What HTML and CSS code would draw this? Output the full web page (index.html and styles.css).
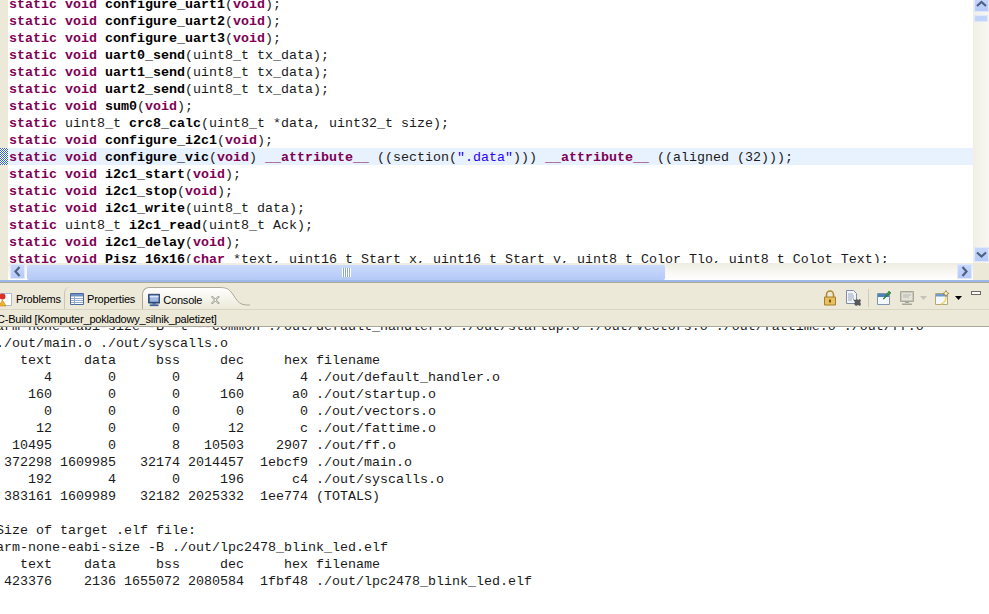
FILE: index.html
```html
<!DOCTYPE html>
<html lang="en">
<head>
    <meta charset="UTF-8">
    <title>Console</title>
    <link rel="stylesheet" href="styles.css">
</head>
<body>
    <div class="editor">
        <div class="ruler">
            <svg class="ruler-mark" width="8" height="17" shape-rendering="crispEdges"><defs><pattern id="checker" width="2" height="2" patternUnits="userSpaceOnUse"><rect width="2" height="2" fill="#fff"/><rect width="1" height="1" fill="#2f62dc"/><rect x="1" y="1" width="1" height="1" fill="#2f62dc"/></pattern></defs><rect width="8" height="17" fill="url(#checker)"/></svg>
        </div>
        <div class="code-pane">
<pre class="code"><span class="line"><b class="kw">static</b> <b class="kw">void</b> <b>configure_uart1</b>(<b class="kw">void</b>);</span><span class="line"><b class="kw">static</b> <b class="kw">void</b> <b>configure_uart2</b>(<b class="kw">void</b>);</span><span class="line"><b class="kw">static</b> <b class="kw">void</b> <b>configure_uart3</b>(<b class="kw">void</b>);</span><span class="line"><b class="kw">static</b> <b class="kw">void</b> <b>uart0_send</b>(uint8_t tx_data);</span><span class="line"><b class="kw">static</b> <b class="kw">void</b> <b>uart1_send</b>(uint8_t tx_data);</span><span class="line"><b class="kw">static</b> <b class="kw">void</b> <b>uart2_send</b>(uint8_t tx_data);</span><span class="line"><b class="kw">static</b> <b class="kw">void</b> <b>sum0</b>(<b class="kw">void</b>);</span><span class="line"><b class="kw">static</b> uint8_t <b>crc8_calc</b>(uint8_t *data, uint32_t size);</span><span class="line"><b class="kw">static</b> <b class="kw">void</b> <b>configure_i2c1</b>(<b class="kw">void</b>);</span><span class="line line-current"><b class="kw">static</b> <b class="kw">void</b> <b>configure_vic</b>(<b class="kw">void</b>) <b class="kw">__attribute__</b> ((section(<span class="str">".data"</span>))) <b class="kw">__attribute__</b> ((aligned (32)));</span><span class="line"><b class="kw">static</b> <b class="kw">void</b> <b>i2c1_start</b>(<b class="kw">void</b>);</span><span class="line"><b class="kw">static</b> <b class="kw">void</b> <b>i2c1_stop</b>(<b class="kw">void</b>);</span><span class="line"><b class="kw">static</b> <b class="kw">void</b> <b>i2c1_write</b>(uint8_t data);</span><span class="line"><b class="kw">static</b> uint8_t <b>i2c1_read</b>(uint8_t Ack);</span><span class="line"><b class="kw">static</b> <b class="kw">void</b> <b>i2c1_delay</b>(<b class="kw">void</b>);</span><span class="line"><b class="kw">static</b> <b class="kw">void</b> <b>Pisz_16x16</b>(<b class="kw">char</b> *text, uint16_t Start_x, uint16_t Start_y, uint8_t Color_Tlo, uint8_t Colot_Text);</span></pre>
        </div>
        <div class="vbar">
            <div class="sb-btn sb-btn-first"><svg width="15" height="15" viewBox="0 0 15 15"><path d="M3 9l4.500-4 4.500 4" class="chevron"/></svg></div>
            <div class="vbar-thumb"></div>
            <div class="sb-btn sb-btn-last"><svg width="15" height="15" viewBox="0 0 15 15"><path d="M3 5.500l4.500 4 4.500-4" class="chevron"/></svg></div>
        </div>
        <div class="hbar">
            <div class="sb-btn"><svg width="15" height="15" viewBox="0 0 15 15"><path d="M9.500 3l-4 4.500 4 4.500" class="chevron"/></svg></div>
            <div class="hbar-thumb"><span class="grip"></span></div>
            <div class="sb-btn sb-btn-right"><svg width="15" height="15" viewBox="0 0 15 15"><path d="M5.500 3l4 4.500-4 4.500" class="chevron"/></svg></div>
        </div>
        <div class="corner"></div>
    </div>

    <div class="panel">
        <div class="tabbar">
            <div class="tab tab-problems">
                <svg width="14" height="15" viewBox="0 0 14 15"><path d="M.5 1.500h12v12H.5z" fill="#fff" stroke="#a9b8d6"/><circle cx="3.500" cy="4.500" r="3" fill="#d9302a"/><path d="M3.500 8l3.500 6H0z" fill="#f0b429" stroke="#c5801a" stroke-width=".6"/></svg>
                <span>Problems</span>
            </div>
            <div class="tab tab-properties">
                <svg width="14" height="14" viewBox="0 0 14 14"><path d="M.5 1.500h13v11H.5z" fill="#fff" stroke="#4a6a9f"/><path d="M1 2h12v2.500H1z" fill="#6d8fc4"/><path d="M4.500 4.500v8M1 6.500h12M1 8.500h12M1 10.500h12" stroke="#93a9cc"/></svg>
                <span>Properties</span>
            </div>
            <div class="tab tab-console">
                <svg width="14" height="14" viewBox="0 0 14 14"><path d="M.5.5h13v10H.5z" fill="#2f4f85" stroke="#243f70"/><path d="M2 2h10v7H2z" fill="#9fb8dc"/><path d="M2 2h10v2H2z" fill="#dbe6f5"/><path d="M5 11h4v1H5z" fill="#243f70"/><path d="M2 12h10v2H2z" fill="#3d5f98"/></svg>
                <span class="tab-label">Console</span>
                <svg width="10" height="10" viewBox="0 0 10 10" class="tab-close"><path d="M.5 1.500l1-1L5 4l3.500-3.500 1 1L6 5l3.500 3.500-1 1L5 6 1.500 9.500l-1-1L4 5z" fill="#fff" stroke="#8a887c"/></svg>
            </div>
            <svg class="tab-curve" width="30" height="22" viewBox="0 0 30 22"><defs><linearGradient id="tabfade" x1="0" y1="0" x2="0" y2="1"><stop offset="0" stop-color="#fff"/><stop offset="1" stop-color="#ece9d8"/></linearGradient></defs><path d="M0 0C8 0 10 3 14 9 18 15 20 18 28 18H30V22H0z" fill="url(#tabfade)"/><path d="M0 .5C8 .5 10 3 14 9 18 15 20 18 28 18h2" fill="none" stroke="#aca899"/></svg>
            <div class="toolbar">
                <svg width="16" height="16" viewBox="0 0 16 16"><path d="M4.500 7V4.500a3.500 3.500 0 0 1 7 0V7" fill="none" stroke="#b08a32" stroke-width="1.600"/><path d="M2.500 7h11v8h-11z" fill="#e8c060" stroke="#a47e2a"/><path d="M7 9.500h2v3H7z" fill="#7a5a18"/></svg>
                <svg width="16" height="16" viewBox="0 0 16 16"><path d="M1.500.5h7l3 3v10h-10z" fill="#f2f4f8" stroke="#7f8ea8"/><path d="M3 4h5M3 6h6M3 8h6M3 10h4" stroke="#9aa8c0"/><path d="M8 9l2 1 2-1 1 1 2-1 1 2-1 1 1 2-1 2-2-1-2 1-1-1-1-1 1-2-1-1z" fill="#55585c"/></svg>
                <div class="tool-sep"></div>
                <svg width="16" height="16" viewBox="0 0 16 16"><path d="M1.500 3.500h12v11h-12z" fill="#f4f8fc" stroke="#7f94b0"/><path d="M2 4h11v3H2z" fill="#4e82bd"/><path d="M7 9l4-5 2-3 2 2-3 2-4 4z" fill="#3f9a3c" stroke="#206a20" stroke-width=".6"/></svg>
                <div class="tool-group">
                    <svg width="16" height="16" viewBox="0 0 16 16"><path d="M1.500 1.500h13v10h-13z" fill="#c9c8bd" stroke="#a8a79c"/><path d="M3 3h10v7H3z" fill="#e4e3da"/><path d="M4 5h8M4 7h6" stroke="#b5b4a9"/><path d="M6 12h4v1H6zM3 13.500h10v1.500H3z" fill="#a8a79c"/></svg>
                    <svg width="7" height="4" viewBox="0 0 7 4"><path d="M0 0h7L3.500 4z" fill="#c4c3b8"/></svg>
                </div>
                <div class="tool-group">
                    <svg width="16" height="16" viewBox="0 0 16 16"><path d="M1.500 3.500h12v11h-12z" fill="#f3f8fc" stroke="#b4a878"/><path d="M2 4h11v2.500H2z" fill="#6f9ac9"/><path d="M7 14c3-1 5-4 5-7" fill="none" stroke="#f2d56a" stroke-width="1.500"/><path d="M12 .5l1 2 2 1-2 1-1 2-1-2-2-1 2-1z" fill="#fff3c0" stroke="#8a7430" stroke-width=".7"/></svg>
                    <svg width="7" height="4" viewBox="0 0 7 4"><path d="M0 0h7L3.500 4z" fill="#000"/></svg>
                </div>
                <div class="tool-min"></div>
            </div>
        </div>
        <div class="console-title">C-Build [Komputer_pokladowy_silnik_paletizet]</div>
        <div class="console-pane">
<pre class="console">arm-none-eabi-size -B -t --common ./out/default_handler.o ./out/startup.o ./out/vectors.o ./out/fattime.o ./out/ff.o
./out/main.o ./out/syscalls.o
   text    data     bss     dec     hex filename
      4       0       0       4       4 ./out/default_handler.o
    160       0       0     160      a0 ./out/startup.o
      0       0       0       0       0 ./out/vectors.o
     12       0       0      12       c ./out/fattime.o
  10495       0       8   10503    2907 ./out/ff.o
 372298 1609985   32174 2014457  1ebcf9 ./out/main.o
    192       4       0     196      c4 ./out/syscalls.o
 383161 1609989   32182 2025332  1ee774 (TOTALS)

Size of target .elf file:
arm-none-eabi-size -B ./out/lpc2478_blink_led.elf
   text    data     bss     dec     hex filename
 423376    2136 1655072 2080584  1fbf48 ./out/lpc2478_blink_led.elf</pre>
        </div>
    </div>
</body>
</html>
```

FILE: styles.css
```css
html, body {
    margin: 0;
    padding: 0;
    height: 100%;
}
body {
    width: 989px;
    height: 614px;
    overflow: hidden;
    display: flex;
    flex-direction: column;
    background: #ffffff;
    font-family: "Liberation Sans", Arial, sans-serif;
    font-size: 11px;
    color: #000000;
}
pre {
    margin: 0;
    font-family: "Liberation Mono", "Courier New", monospace;
    font-size: 13.33px;
    line-height: 17px;
}

/* editor */
.editor {
    display: grid;
    grid-template-columns: 8px 965px 16px;
    grid-template-rows: 263px 17px;
    flex: none;
}
.ruler {
    grid-row: 1 / 3;
    background: #ece9d8;
    padding-top: 148px;
}
.ruler-mark {
    display: block;
}
.code-pane {
    overflow: hidden;
}
.code {
    margin-top: -5px;
    color: #1a1a1a;
}
.line {
    display: block;
    height: 17px;
    box-sizing: border-box;
    padding: 1px 0 0 1px;
}
.line b {
    color: #000000;
}
.line b.kw {
    color: #7f0055;
}
.line-current {
    background: #e8f2fe;
}
.str {
    color: #2a00ff;
}

/* scrollbars */
.vbar {
    display: flex;
    flex-direction: column;
    align-items: center;
    overflow: hidden;
    background: linear-gradient(to right, #f1efe5, #f8f7f1);
}
.sb-btn {
    width: 15px;
    height: 15px;
    flex: none;
    box-sizing: border-box;
    background: linear-gradient(#c9d8fc, #b4c9f7);
    border-radius: 2px;
    box-shadow: inset 0 0 0 1px #dfe8fd;
}
.sb-btn svg {
    display: block;
}
.chevron {
    fill: none;
    stroke: #4d6185;
    stroke-width: 2.2;
}
.sb-btn-first {
    margin-top: -3px;
}
.sb-btn-last {
    margin-top: auto;
    margin-bottom: 1px;
}
.vbar-thumb {
    width: 14px;
    height: 7px;
    margin-top: 3px;
    background: #c3d4fb;
    border-radius: 2px;
    box-shadow: inset 0 0 0 1px #dfe8fd;
}
.hbar {
    display: flex;
    padding: 1px 1px 0 2px;
    align-items: flex-start;
    background: linear-gradient(#efede2, #ffffff);
}
.hbar-thumb {
    width: 638px;
    height: 15px;
    margin: 1px 0 0 2px;
    display: flex;
    align-items: center;
    justify-content: center;
    background: linear-gradient(#cbdafc, #b4c9f7);
    border-radius: 2px;
}
.grip {
    width: 9px;
    height: 9px;
    background: repeating-linear-gradient(to right, #ffffff 0 1px, #8ea8dc 1px 2px);
}
.sb-btn-right {
    margin-left: auto;
}
.corner {
    background: #ece9d8;
}

/* console view */
.panel {
    flex: 1;
    min-height: 0;
    display: flex;
    flex-direction: column;
    border-top: 2px solid #9db8e8;
}
.tabbar {
    flex: none;
    height: 28px;
    box-sizing: border-box;
    display: flex;
    align-items: flex-end;
    background: #ece9d8;
    border-top: 1px solid #aca899;
    border-bottom: 1px solid #d9d6c6;
}
.tab {
    height: 22px;
    box-sizing: border-box;
    padding-top: 2px;
    display: flex;
    align-items: center;
    gap: 3px;
    letter-spacing: -0.2px;
}
.tab-problems {
    width: 65px;
    margin-left: -1px;
}
.tab-properties {
    width: 78px;
    padding-left: 5px;
    border-left: 1px solid #c9c6b5;
    border-top-left-radius: 6px;
}
.tab-console {
    width: 78px;
    padding-left: 5px;
    background: linear-gradient(#ffffff, #ece9d8);
    border-left: 1px solid #aca899;
    border-top: 1px solid #aca899;
    border-top-left-radius: 7px;
}
.tab-close {
    margin-left: 6px;
}
.tab-curve {
    flex: none;
}
.toolbar {
    height: 22px;
    margin-left: auto;
    padding-right: 8px;
    display: flex;
    align-items: center;
    gap: 7px;
}
.tool-group {
    display: flex;
    align-items: center;
    gap: 5px;
}
.tool-sep {
    width: 1px;
    height: 18px;
    background: #cfcbb8;
}
.tool-min {
    width: 8px;
    height: 2px;
    margin: 0 0 11px 2px;
    background: #ffffff;
    border: 1px solid #6e6c60;
}
.console-title {
    flex: none;
    height: 17px;
    box-sizing: border-box;
    line-height: 18px;
    letter-spacing: -0.2px;
    text-indent: -3px;
    white-space: nowrap;
    overflow: hidden;
    background: #ece9d8;
    border-bottom: 1px solid #aca899;
}
.console-pane {
    flex: 1;
    min-height: 0;
    overflow: hidden;
}
.console {
    margin: -9px 0 0 -4px;
    color: #1a1a1a;
}
```
